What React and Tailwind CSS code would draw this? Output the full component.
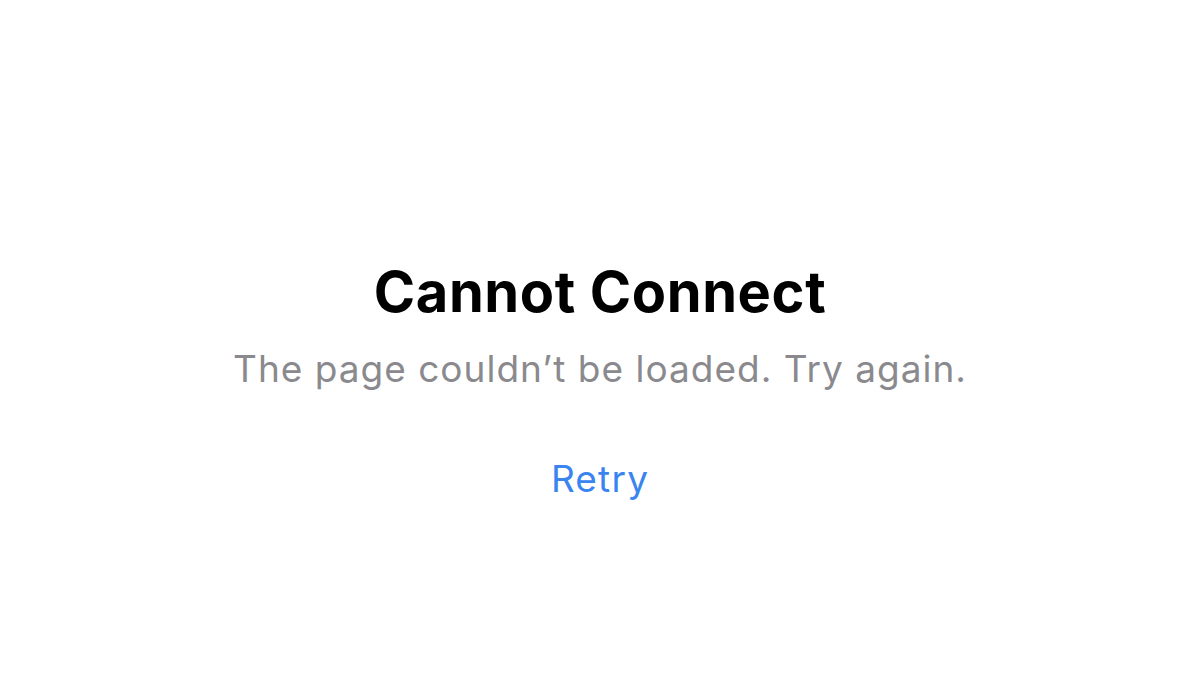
export default function App() {
  return (
    <div className="w-[1200px] h-[675px] bg-white flex flex-col items-center pt-[260px]" style={{ fontFamily: 'Inter, "Noto Sans", sans-serif' }}>
      <h1 className="text-[56px] leading-[64px] font-bold text-black tracking-[0.6px]">Cannot Connect</h1>
      <p className="mt-[23px] text-[37px] leading-[44px] text-[#8a8a8e] tracking-[1px]">The page couldn’t be loaded. Try again.</p>
      <button className="mt-[66px] text-[37px] leading-[44px] text-[#3a84f0] tracking-[1.2px]">Retry</button>
    </div>
  );
}
